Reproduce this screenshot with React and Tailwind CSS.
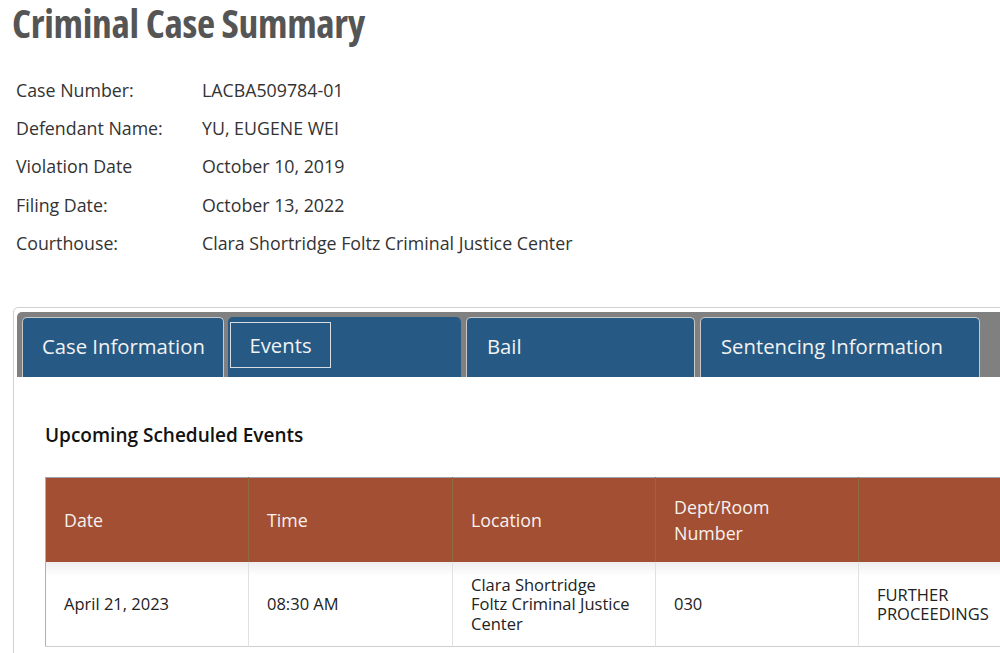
import React from "react";

const info = [
  ["Case Number:", "LACBA509784-01"],
  ["Defendant Name:", "YU, EUGENE WEI"],
  ["Violation Date", "October 10, 2019"],
  ["Filing Date:", "October 13, 2022"],
  ["Courthouse:", "Clara Shortridge Foltz Criminal Justice Center"],
];

export default function App() {
  return (
    <div className="w-[1000px] h-[653px] overflow-hidden bg-white text-[#333]" style={{ fontFamily: '"Open Sans", sans-serif' }}>
      <h1 className="pl-[12px] pt-[1px] h-[52px] text-[39.5px] leading-[44px] font-bold text-[#555] [font-stretch:75%] tracking-[-0.3px]">
        Criminal Case Summary
      </h1>
      <div className="pl-[16px] pt-[19px] flex flex-col">
        {info.map(([k, v]) => (
          <div key={k} className="flex h-[38.3px] items-center text-[17.8px] text-[#333]">
            <div className="w-[186px]">{k}</div>
            <div>{v}</div>
          </div>
        ))}
      </div>
      <div className="mt-[45px] ml-[13px] w-[1000px] h-[400px] border border-[#d0d0d0] rounded-[5px] pt-[4px] pl-[3px]">
        <div className="h-[65px] bg-[#808080] rounded-tl-[5px] flex items-end pl-[5px] gap-[4px]">
          <div className="w-[202px] h-[60px] bg-[#265A85] border border-b-0 border-[#c8c8c8] rounded-t-[5px] flex items-center pl-[19px] pb-[3px] text-[20.3px] text-[#f2f2f2]">
            Case Information
          </div>
          <div className="w-[233px] h-[60px] bg-[#265A85] rounded-t-[5px] flex items-start pt-[5px] pl-[2px] text-[20.3px] text-[#f2f2f2]">
            <div className="w-[101px] h-[46px] border border-[#d8dde3] flex items-center justify-center">Events</div>
          </div>
          <div className="ml-[1px] w-[229px] h-[60px] bg-[#265A85] border border-b-0 border-[#c8c8c8] rounded-t-[5px] flex items-center pl-[20px] pb-[3px] text-[20.3px] text-[#f2f2f2]">
            Bail
          </div>
          <div className="ml-[1px] w-[280px] h-[60px] bg-[#265A85] border border-b-0 border-[#c8c8c8] rounded-t-[5px] flex items-center pl-[20px] pb-[3px] text-[20.3px] text-[#f2f2f2]">
            Sentencing Information
          </div>
        </div>
        <div className="pl-[28px] pt-[45px]">
          <h2 className="text-[19px] font-semibold text-[#111] leading-[26px]">Upcoming Scheduled Events</h2>
          <table className="mt-[29px] border-collapse table-fixed w-[1100px] border-l border-[#b0b0b0]">
            <colgroup>
              <col className="w-[203px]" />
              <col className="w-[204px]" />
              <col className="w-[203px]" />
              <col className="w-[203px]" />
              <col className="w-[287px]" />
            </colgroup>
            <thead>
              <tr className="h-[84px] bg-[#A34F34] text-[#f7f2ef] text-[17.8px] border-t border-[#9aa3ad]">
                {["Date", "Time", "Location", "Dept/Room Number", ""].map((h, i) => (
                  <th key={i} className="text-left font-normal pl-[18px] pr-[40px] leading-[26px] border-r border-[#8f6c3c]">
                    {h}
                  </th>
                ))}
              </tr>
            </thead>
            <tbody>
              <tr className="h-[85px] text-[16.5px] text-[#222] border-b border-[#cfcfcf] bg-[linear-gradient(to_bottom,#eeeeee_0px,#ffffff_14px)]">
                <td className="pl-[18px] border-r border-[#e0e0e0]">April 21, 2023</td>
                <td className="pl-[18px] border-r border-[#e0e0e0]">08:30 AM</td>
                <td className="pl-[18px] border-r border-[#e0e0e0]">
                  <div className="w-[165px] leading-[19.5px]">Clara Shortridge Foltz Criminal Justice Center</div>
                </td>
                <td className="pl-[18px] border-r border-[#e0e0e0]">030</td>
                <td className="pl-[18px] border-r border-[#e0e0e0]">
                  <div className="w-[120px] leading-[19.5px]">FURTHER PROCEEDINGS</div>
                </td>
              </tr>
            </tbody>
          </table>
        </div>
      </div>
    </div>
  );
}
